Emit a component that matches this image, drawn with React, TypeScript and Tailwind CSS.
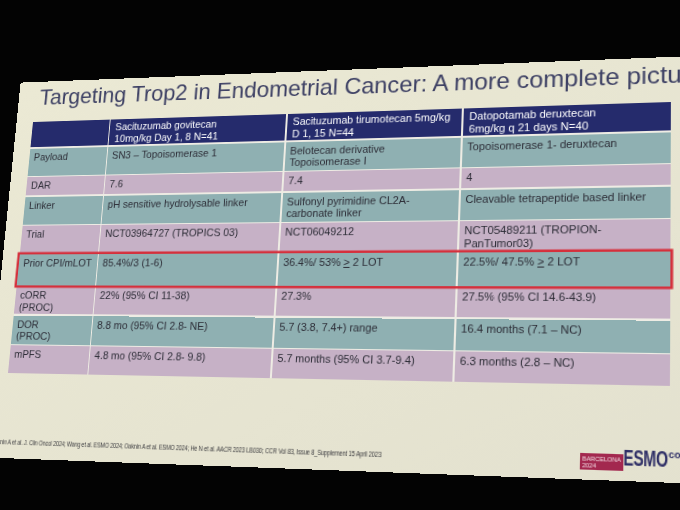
import type { ReactNode } from "react"

// slide is laid out flat, then warped onto the photographed screen
function quadTransform(x: number, y: number, w: number, h: number, q: number[][]) {
  const [[x0, y0], [x1, y1], [x2, y2], [x3, y3]] = q
  const dx1 = x1 - x2, dx2 = x3 - x2, dx3 = x0 - x1 + x2 - x3
  const dy1 = y1 - y2, dy2 = y3 - y2, dy3 = y0 - y1 + y2 - y3
  const den = dx1 * dy2 - dx2 * dy1
  const g = (dx3 * dy2 - dx2 * dy3) / den
  const k = (dx1 * dy3 - dx3 * dy1) / den
  const a = x1 - x0 + g * x1
  const b = x3 - x0 + k * x3
  const d = y1 - y0 + g * y1
  const e = y3 - y0 + k * y3
  const A = a / w, B = b / h, C = x0 - A * x - B * y
  const D = d / w, E = e / h, F = y0 - D * x - E * y
  const G = g / w, H = k / h, I = 1 - G * x - H * y
  return `matrix3d(${A},${D},0,${G},${B},${E},0,${H},0,0,1,0,${C},${F},0,${I})`
}

// table corners in the photo: TL, TR, BR, BL
const warp = quadTransform(19, 45, 650, 270, [
  [33, 122],
  [671, 102],
  [670, 386],
  [8, 373],
])

const TEAL = "bg-[#8fb0b2]"
const MAUVE = "bg-[#c6b1c6]"
const NARROW = "font-['Liberation_Sans_Narrow','Liberation_Sans',sans-serif]"

const ge = <span className="underline">&gt;</span>

type Row = {
  label: ReactNode
  cells: ReactNode[]
  tone: string
  height: string
  highlight?: boolean
}

const headers: ReactNode[] = [
  <>Sacituzumab govitecan<br />10mg/kg Day 1, 8 N=41</>,
  <>Sacituzumab tirumotecan 5mg/kg<br />D 1, 15 N=44</>,
  <>Datopotamab deruxtecan<br />6mg/kg q 21 days N=40</>,
]

const rows: Row[] = [
  {
    label: "Payload",
    tone: TEAL,
    height: "h-[30px]",
    cells: ["SN3 – Topoisomerase 1", <>Belotecan derivative<br />Topoisomerase I</>, "Topoisomerase 1- deruxtecan"],
  },
  { label: "DAR", tone: MAUVE, height: "h-[20px]", cells: ["7.6", "7.4", "4"] },
  {
    label: "Linker",
    tone: TEAL,
    height: "h-[30px]",
    cells: ["pH sensitive hydrolysable linker", <>Sulfonyl pyrimidine CL2A-<br />carbonate linker</>, "Cleavable tetrapeptide based linker"],
  },
  {
    label: "Trial",
    tone: MAUVE,
    height: "h-[29px]",
    cells: ["NCT03964727 (TROPICS 03)", "NCT06049212", <>NCT05489211 (TROPION-<br />PanTumor03)</>],
  },
  {
    label: "Prior CPI/mLOT",
    tone: TEAL,
    height: "h-[33px]",
    highlight: true,
    cells: ["85.4%/3 (1-6)", <>36.4%/ 53% {ge} 2 LOT</>, <>22.5%/ 47.5% {ge} 2 LOT</>],
  },
  {
    label: <>cORR<br />(PROC)</>,
    tone: MAUVE,
    height: "h-[29px]",
    cells: ["22% (95% CI 11-38)", "27.3%", "27.5% (95% CI 14.6-43.9)"],
  },
  {
    label: <>DOR<br />(PROC)</>,
    tone: TEAL,
    height: "h-[30px]",
    cells: ["8.8 mo (95% CI 2.8- NE)", "5.7 (3.8, 7.4+) range", "16.4 months (7.1 – NC)"],
  },
  {
    label: "mPFS",
    tone: MAUVE,
    height: "h-[29px]",
    cells: ["4.8 mo (95% CI 2.8- 9.8)", "5.7 months (95% CI 3.7-9.4)", "6.3 months (2.8 – NC)"],
  },
]

const grid = "grid grid-cols-[86.5px_189px_175.5px_194.5px] gap-x-[1.5px]"
const cell = "whitespace-nowrap px-[5px] pt-[3px] text-[10.7px] leading-[12.5px] text-[#2c2c36]"

export default function App() {
  return (
    <div className="h-[510px] w-[680px] overflow-hidden bg-[#030303]">
      <div
        className="h-[402px] w-[763px] origin-top-left bg-gradient-to-br from-[#ebe9d4] to-[#e3e1cf] pl-[19px] pt-[4px] font-['Liberation_Sans',Arial,sans-serif]"
        style={{ transform: warp }}
      >
        {/* Title */}
        <h1 className="mb-[13px] ml-[5px] h-[28px] whitespace-nowrap text-[23.8px] leading-[28px] text-[#3d4064]">
          Targeting Trop2 in Endometrial Cancer: A more complete picture
        </h1>

        {/* Comparison table */}
        <div className="flex w-[650px] flex-col gap-y-[1.5px] bg-[#eeece4]">
          <div className={`${grid} h-[28px]`}>
            <div className="bg-[#252b6c]" />
            {headers.map((h, i) => (
              <div
                key={i}
                className="whitespace-nowrap bg-[#252b6c] px-[6px] pt-[2px] text-[10.7px] leading-[12.5px] text-white"
              >
                {h}
              </div>
            ))}
          </div>

          {rows.map((row, i) => (
            <div
              key={i}
              className={`${grid} ${row.height} ${
                row.highlight ? "relative z-10 ring-[2.5px] ring-[#d5303c]" : ""
              }`}
            >
              <div className={`${cell} ${row.tone}`}>{row.label}</div>
              {row.cells.map((c, j) => (
                <div key={j} className={`${cell} ${row.tone}`}>
                  {c}
                </div>
              ))}
            </div>
          ))}
        </div>

        {/* Footer: references + congress logo */}
        <div className="mt-[58px] flex h-[22px] items-end">
          <div className="-ml-[11px] w-[583px]">
            <p
              className={`inline-block origin-left scale-x-[0.75] whitespace-nowrap ${NARROW} text-[7.5px] leading-[8px] tracking-[-0.15px] text-[#3a3a3e]`}
            >
              Oaknin A et al. J. Clin Oncol 2024; Wang et al. ESMO 2024; Oaknin A et al. ESMO 2024; He N et al. AACR 2023
              LB030; CCR Vol 83, Issue 8_Supplement 15 April 2023
            </p>
          </div>
          <div className="flex h-[22px] items-end">
            <div
              className={`mb-[2px] flex h-[15px] w-[38px] flex-col justify-center bg-[#a3284f] px-[2px] ${NARROW} text-[5.5px] leading-[6px] text-[#f3dde5]`}
            >
              <span>BARCELONA</span>
              <span>2024</span>
            </div>
            <div className="w-[39px]">
              <span
                className={`inline-block origin-left scale-x-[0.64] ${NARROW} text-[21px] font-bold leading-[16px] tracking-[-0.5px] text-[#2f2f66]`}
              >
                ESMO
              </span>
            </div>
            <span className={`self-start ${NARROW} text-[9px] font-bold leading-[8px] text-[#2f2f66]`}>
              congress
            </span>
          </div>
        </div>
      </div>
    </div>
  )
}
